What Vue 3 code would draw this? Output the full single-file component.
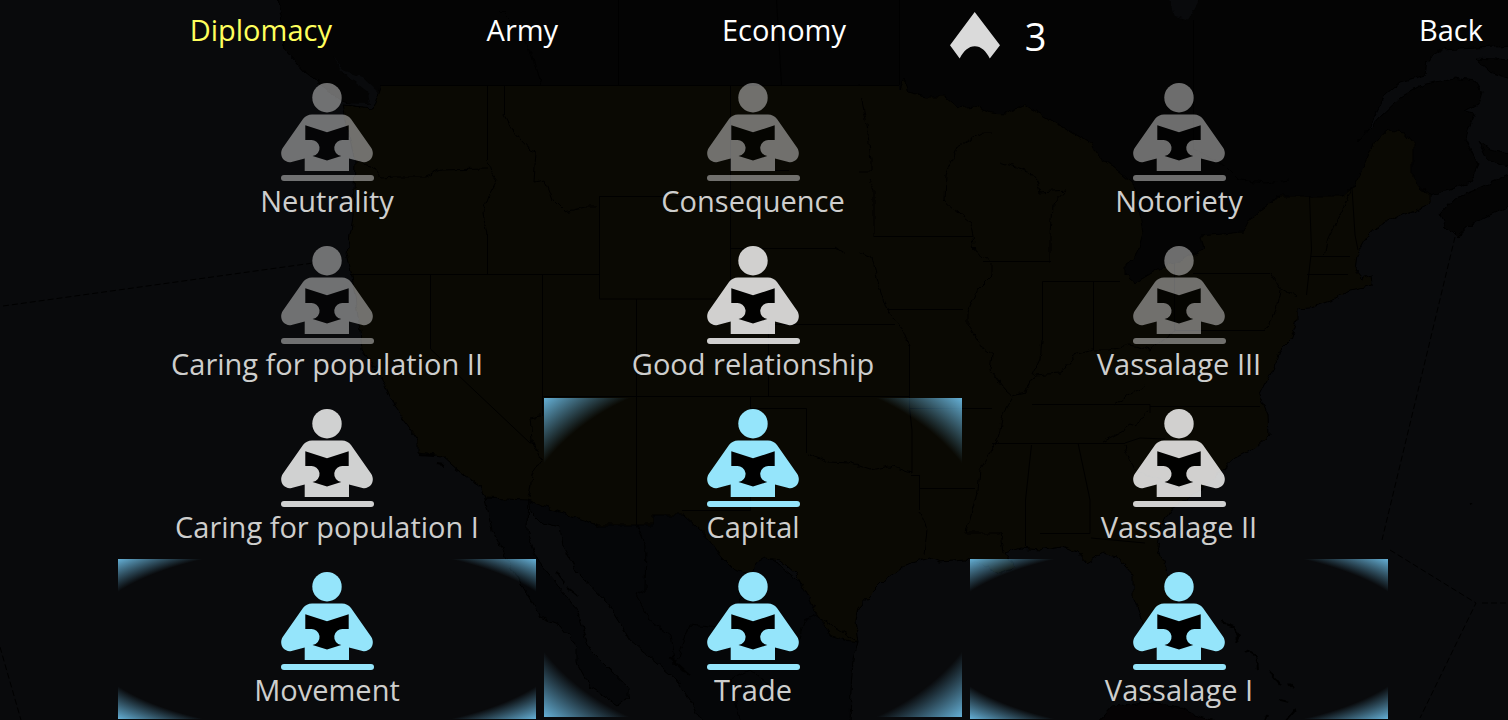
<script setup>
import { ref } from 'vue'

const tabs = ['Diplomacy', 'Army', 'Economy']
const activeTab = ref('Diplomacy')
const points = 3

const policies = [
  { name: 'Neutrality', state: 'locked' },
  { name: 'Consequence', state: 'locked' },
  { name: 'Notoriety', state: 'locked' },
  { name: 'Caring for population II', state: 'locked' },
  { name: 'Good relationship', state: 'open' },
  { name: 'Vassalage III', state: 'locked' },
  { name: 'Caring for population I', state: 'open' },
  { name: 'Capital', state: 'adopted' },
  { name: 'Vassalage II', state: 'open' },
  { name: 'Movement', state: 'adopted' },
  { name: 'Trade', state: 'adopted' },
  { name: 'Vassalage I', state: 'adopted' }
].map((p, i) => ({ ...p, cell: { gridColumn: (i % 3) + 1, gridRow: Math.floor(i / 3) + 1 } }))
</script>

<template>
  <div class="screen">
    <svg class="map" viewBox="0 0 1508 720" preserveAspectRatio="xMidYMid slice" aria-hidden="true">
      <defs>
        <filter id="rough" x="0" y="0" width="100%" height="100%" color-interpolation-filters="sRGB">
          <feTurbulence type="fractalNoise" baseFrequency="0.12" numOctaves="2" seed="4" />
          <feDisplacementMap in="SourceGraphic" scale="7" xChannelSelector="R" yChannelSelector="G" />
        </filter>
      </defs>
      <g filter="url(#rough)">
        <path class="canada" d="M276-5L283 25 285 50 305 72 325 87 342 101 360 107 374 107 380 120 420 300 1200 300 1300 200 1430 196 1450 190 1470 182 1478 165 1466 140 1468 130 1475 114 1465 112 1478 105 1482 92 1475 81 1455 78 1425 84 1400 98 1380 117 1357 142 1370 125 1385 95 1400 82 1425 75 1427 60 1440 50 1515 46V-5Z" />
        <path class="canada" d="M1440 215L1455 198 1480 188 1515 172V203L1490 215 1470 225 1457 237 1445 225ZM1478 140L1490 150 1515 155V168L1488 160Z" />
        <path class="sea" d="M333 55L342 70 362 77 378 92 378 107 366 108 342 103 370 104 368 92 352 80 340 70ZM1168-5L1175 16 1188 20 1202-5Z" />
        <path class="canada" d="M1475 58L1515 60V80L1490 72Z" />
        <path class="mexico" d="M485 498L528 495 527 530 537 560 560 587 577 610 590 650 608 668 628 687 628 697 618 705 590 687 577 663 577 647 560 625 540 617 506 557 492 530Z" />
        <path class="mexico" d="M528 495L598 525 653 510 683 513 760 550 810 590 858 642 853 660 851 690 850 725 705 725 700 718 677 680 650 657 630 640 607 603 577 572 563 547 560 527 540 522 530 512Z" />
        <path class="cuba" d="M1095 725L1113 705 1147 702 1180 707 1200 717 1230 725Z" />
        <path class="isles" d="M420 455l14 1M438 464l5 1M456 468l5 4M556 570l8 12M567 588l10 8M1222 622l12 4 5 10-3 6M1246 650l10 6 2 12M1268 670l12 14M1290 684l4 4M1280 700l8 2M1296 708l-10 12M1267 715l-2 6M1470 503l3-1M690 675l-20-18" />
        <path class="usa" d="M381 87L400 92H860L899 90 904 78 908 93 925 97 945 97 958 108 975 106 990 113 1004 114 1025 105 1092 144 1098 156 1117 170 1135 185 1143 233 1136 258 1125 265 1125 275 1135 283 1160 268 1185 258 1203 250 1200 236 1243 232 1250 218 1280 196 1343 196 1352 188 1362 170 1375 142 1388 130 1405 132 1413 142V178L1420 188 1430 196 1430 203 1415 210 1400 215 1375 228 1365 240 1357 255 1355 270 1362 278 1372 274 1373 285 1350 290 1335 299 1310 308 1297 309 1297 320 1290 340 1280 350 1275 365 1265 385 1260 395 1268 415 1269 435 1255 448 1235 458 1222 470 1200 490 1170 510 1160 530 1157 545 1168 573 1176 600 1174 635 1160 640 1143 623 1133 597 1133 575 1117 557 1103 553 1087 563 1077 552 1062 546 1040 550 1020 548 1005 553 1015 568 1000 573 985 565 965 560 940 562 930 558 905 565 885 580 870 595 858 608 855 620 858 642 845 640 830 635 815 610 805 590 795 573 780 560 765 558 755 563 752 575 735 570 720 555 710 540 683 515H653V525H598L527 500 485 498 480 487 460 472 442 456 418 453V440L395 407 382 377 362 350 360 330 352 277 347 253 353 217 355 163 343 105 373 108Z" />
        <path class="line" d="M487 160L491 172 497 180 489 195 483 213 487 234M357 163L372 166 380 178 395 177 425 177 440 170 487 169M504 115L512 130 530 150 536 152 534 182 545 180 553 200 565 212 585 207 598 207M541 416L530 418 532 440 541 460 532 475 530 490 528 498M836 248L845 254M859 85L867 125 871 160V171H859M868 180L874 190V236M858 252L872 257 880 290 886 308 903 330 909 345M973 236L975 252 992 262V275L977 290 968 312V325L985 350 992 355 990 370 1005 390 1013 397 1003 415 998 440 980 470 978 490 975 500 966 533H1000L1003 553M993 133H983L957 147 945 175 944 200 955 210 970 222 973 236M1050 263V235L1052 205 1066 190 1040 192 1037 180 1030 172 1000 162M1042 340L1040 360 1033 375M1012 395L1025 392 1035 375 1060 373 1075 355 1093 350 1110 350 1130 345 1150 350 1175 330M1115 404L1145 385M1150 413L1125 430 1103 442M807 453L830 462 850 463 870 470 890 466 911 473M919 510L928 530 925 555M1125 447L1135 470 1180 490M1193 150L1225 165 1240 180 1265 183 1290 180M1270 273L1280 288 1298 298M1352 188L1342 210 1330 235 1325 255M1265 330L1276 310 1280 290M500 10L515 25 530 50 541 85M637 525L646 545 645 590 635 595 650 620 670 635 675 665 690 625 720 628M720 628L740 600 755 580M858 642L815 615 805 620 795 650M740 720L730 680 750 670 775 690" />
      </g>
      <path class="fill-us" d="M381 86H899V98H381Z" />
      <path class="line" d="M487.500 85V160M487.500 234V274M504.500 85V115M350 274.500H599M430.500 274V349L530 443M542.500 274V416M599.500 196V299H730M599 196.500H730M730.500 85V299M636.500 299V525M542 396.500H909M730 248.500H836M768.500 325V396M768 324.500H895M775 170.500H789M874 236.500H973M909.500 345V408L912 430V473M887 309.500H963M983 261.500H1051M1042.500 340V281.500H1120M1093.500 281V350M1032 404.500H1150V413M1150 406.500H1260M992 443.500H1125M1031.500 445L1025.500 500V546M1078 443L1090 500V533.500H1040M1091 538L1145 543M750.500 396V408.500H806.500V453M750.500 408V510.500H682M919.500 475V510M911 475.500H919M919 488.500H975M909 408.500H992M618.500 0V85M776.500 0L781.500 85M899.500 0V85M380 85.500H899M1193.500 20V150M1193 273.500H1270M1174.500 264V330.500H1265M1309.500 196L1311.500 250 1306.500 295M1352 188L1355 235 1358 250M1311 256.500H1350M1307 274.500H1348M1125 443L1140 438 1165 439" />
      <path class="route" d="M3 306L313 263M0 647L21 720M1455 237L1382 540M1390 550L1476 603 1420 718M1482 603H1508" />
    </svg>

    <header class="bar">
      <nav class="tabs">
        <button
          v-for="tab in tabs"
          :key="tab"
          type="button"
          class="tab"
          :class="{ active: tab === activeTab }"
          @click="activeTab = tab"
        >{{ tab }}</button>
      </nav>
      <div class="points">
        <svg width="50" height="47" viewBox="0 0 50 47" aria-hidden="true">
          <path fill="#dadada" d="M24.700 0L50 33.200 39.800 46.500C36 39 31 34.300 24.800 34.300S13.500 39 9.700 46.500L0 33.200Z" />
        </svg>
        <span>{{ points }}</span>
      </div>
      <button type="button" class="back">Back</button>
    </header>

    <main class="tree">
      <div class="glow glow-left"></div>
      <div class="glow glow-middle"></div>
      <div class="glow glow-right"></div>
      <button
        v-for="p in policies"
        :key="p.name"
        type="button"
        class="policy"
        :class="p.state"
        :style="p.cell"
      >
        <svg class="reader" width="93" height="98" viewBox="0 0 93 98" aria-hidden="true">
          <circle cx="46" cy="14.700" r="14.700" />
          <path d="M31 31.500H61Q66.500 31.500 70 36L90.300 65C94.500 72 89.500 80.500 81.500 79L68 75.500V88H23.700V75.500L10.500 79C2.500 80.500-2.500 72 1.700 65L22 36Q25.500 31.500 31 31.500Z" />
          <path class="book" d="M24.300 42.300L46 49.300 67.700 42.300V57H62.300A8 8 0 0 0 60.300 73L46 77.500 31.500 73A8 8 0 0 0 29.500 57H24.300Z" />
          <rect y="92" width="93" height="6" rx="3" />
        </svg>
        <span class="label">{{ p.name }}</span>
      </button>
    </main>
  </div>
</template>

<style>
body {
  margin: 0;
  background: #090a0c;
}
</style>

<style scoped>
.screen {
  position: relative;
  min-height: 100vh;
  overflow: hidden;
  background: #090a0c;
  font-family: "Open Sans", "Noto Sans", sans-serif;
  font-size: 29px;
  line-height: 40px;
  color: #fff;
}

.map {
  position: absolute;
  inset: 0;
  width: 100%;
  height: 100%;
}

.sea { fill: #090a0c; }
.canada { fill: #040404; stroke: #000; }
.usa { fill: #0a0903; stroke: #000; }
.fill-us { fill: #0a0903; }
.mexico { fill: #050608; stroke: #000; }
.cuba { fill: #050304; stroke: #000; }
.line { fill: none; stroke: #000; }
.isles { fill: none; stroke: #000; stroke-width: 2; }
.route { fill: none; stroke: #000; stroke-dasharray: 6 3; }

button {
  margin: 0;
  padding: 0;
  border: 0;
  background: none;
  color: inherit;
  font: inherit;
  cursor: pointer;
}

.bar {
  position: relative;
  display: flex;
  align-items: flex-start;
  height: 70px;
  padding: 0 25px 0 130px;
  box-sizing: border-box;
}

.tabs {
  display: grid;
  grid-template-columns: repeat(3, 1fr);
  width: 58%;
  padding-top: 10px;
}

.tab.active {
  color: #ffff5c;
}

.points {
  display: flex;
  align-items: flex-start;
  gap: 25px;
  margin-left: 35px;
  padding-top: 12px;
  font-size: 38px;
  line-height: 48px;
}

.back {
  margin: 10px 0 0 auto;
}

.tree {
  position: relative;
  display: grid;
  grid-template-columns: repeat(3, 1fr);
  grid-auto-rows: minmax(160px, auto);
  gap: 3px 8px;
  padding: 0 120px 0 118px;
}

.glow {
  background: radial-gradient(ellipse farthest-corner, transparent 82%, #65b0d6 100%);
}

.glow-left { grid-area: 4 / 1; }
.glow-middle { grid-area: 3 / 2 / 5 / 3; margin: 2px 0; }
.glow-right { grid-area: 4 / 3; }

.policy {
  display: flex;
  flex-direction: column;
  align-items: center;
  justify-content: flex-start;
  padding-top: 13px;
  color: #cececd;
}

.reader {
  display: block;
  fill: #fff;
}

.book { fill: #000; }
.locked .reader { opacity: 0.42; }
.open .reader { opacity: 0.81; }
.adopted .reader { fill: #95e5fb; }
</style>
